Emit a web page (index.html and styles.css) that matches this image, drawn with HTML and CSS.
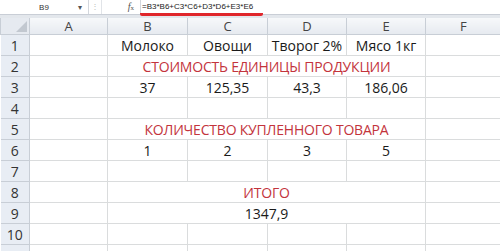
FILE: index.html
```html
<!DOCTYPE html>
<html lang="ru">
<head>
    <meta charset="UTF-8">
    <title>Расчёт стоимости</title>
    <link rel="stylesheet" href="styles.css">
</head>
<body>
    <!-- Formula bar -->
    <div class="formula-bar">
        <div class="name-box">
            <span class="cell-name">B9</span>
            <span class="drop">&#9662;</span>
        </div>
        <div class="grip">&#8942;</div>
        <div class="fx"><i>f</i><sub>x</sub></div>
        <div class="formula">
            <span class="formula-text">=B3*B6+C3*C6+D3*D6+E3*E6</span>
        </div>
    </div>
    <div class="bar-gap"></div>

    <!-- Sheet -->
    <table class="sheet">
        <colgroup>
            <col class="c-head">
            <col class="c-a">
            <col class="c-b">
            <col class="c-c">
            <col class="c-d">
            <col class="c-e">
            <col class="c-f">
        </colgroup>
        <thead>
            <tr>
                <th class="corner"><span class="tri"></span></th>
                <th>A</th>
                <th>B</th>
                <th>C</th>
                <th>D</th>
                <th>E</th>
                <th>F</th>
            </tr>
        </thead>
        <tbody>
            <tr>
                <th>1</th>
                <td></td>
                <td>Молоко</td>
                <td>Овощи</td>
                <td>Творог 2%</td>
                <td>Мясо 1кг</td>
                <td></td>
            </tr>
            <tr>
                <th>2</th>
                <td></td>
                <td colspan="4" class="title">СТОИМОСТЬ ЕДИНИЦЫ ПРОДУКЦИИ</td>
                <td></td>
            </tr>
            <tr>
                <th>3</th>
                <td></td>
                <td>37</td>
                <td>125,35</td>
                <td>43,3</td>
                <td>186,06</td>
                <td></td>
            </tr>
            <tr>
                <th>4</th>
                <td></td><td></td><td></td><td></td><td></td><td></td>
            </tr>
            <tr>
                <th>5</th>
                <td></td>
                <td colspan="4" class="title">КОЛИЧЕСТВО КУПЛЕННОГО ТОВАРА</td>
                <td></td>
            </tr>
            <tr>
                <th>6</th>
                <td></td>
                <td>1</td>
                <td>2</td>
                <td>3</td>
                <td>5</td>
                <td></td>
            </tr>
            <tr>
                <th>7</th>
                <td></td><td></td><td></td><td></td><td></td><td></td>
            </tr>
            <tr>
                <th>8</th>
                <td></td>
                <td colspan="4" class="title">ИТОГО</td>
                <td></td>
            </tr>
            <tr>
                <th>9</th>
                <td></td>
                <td colspan="4">1347,9</td>
                <td></td>
            </tr>
            <tr>
                <th>10</th>
                <td></td><td></td><td></td><td></td><td></td><td></td>
            </tr>
            <tr class="last">
                <th></th>
                <td></td><td></td><td></td><td></td><td></td><td></td>
            </tr>
        </tbody>
    </table>
</body>
</html>
```

FILE: styles.css
```css
/* Page */
body {
    margin: 0;
    width: 500px;
    height: 252px;
    overflow: hidden;
    background-color: #fff;
    font-family: "Open Sans", Arial, sans-serif;
}

/* Formula bar */
.formula-bar {
    display: flex;
    height: 14px;
    border-bottom: 1px solid #c9ced6;
    background-color: #fff;
    font-family: "Liberation Sans", Arial, sans-serif;
    font-size: 8px;
    color: #333;
}

.name-box {
    display: flex;
    align-items: center;
    width: 88px;
    border-right: 1px solid #d3d7dd;
}

.cell-name {
    flex: 1;
    padding-left: 10px;
    text-align: center;
}

.drop {
    width: 10px;
    font-size: 8px;
    color: #555;
}

.grip {
    width: 12px;
    line-height: 14px;
    text-align: center;
    color: #bbb;
    border-right: 1px solid #e1e4e8;
}

.fx {
    width: 32px;
    text-align: right;
    padding-right: 6px;
    line-height: 13px;
    font-family: "Liberation Serif", serif;
    font-size: 10px;
    color: #555;
}

.fx sub {
    font-size: 7px;
    vertical-align: baseline;
}

.formula {
    flex: 1;
    border-left: 1px solid #d3d7dd;
    padding-left: 5px;
    line-height: 13px;
}

.formula-text {
    display: inline-block;
    padding: 0 10px 0 2px;
    margin-left: -6px;
    line-height: 12px;
    border-bottom: 3px solid #e0262b;
    border-radius: 2px;
    color: #222;
}

.bar-gap {
    height: 3px;
    background-color: #e3e7ec;
}

/* Sheet grid */
.sheet {
    border-collapse: collapse;
    table-layout: fixed;
    width: 500px;
}

.c-head { width: 29px; }
.c-a { width: 78px; }
.c-b { width: 80px; }
.c-c { width: 80px; }
.c-d { width: 79px; }
.c-e { width: 79px; }
.c-f { width: 75px; }

.sheet th,
.sheet td {
    padding: 0;
    overflow: hidden;
    white-space: nowrap;
}

.sheet thead th {
    height: 16px;
    font-weight: normal;
    font-size: 13px;
    color: #444;
    line-height: 16px;
    background: linear-gradient(#f6f8fa, #e6eaf0);
    border: 1px solid #c8ced6;
    border-top: none;
}

.sheet thead th:last-child {
    border-right: none;
}

.sheet thead th.corner {
    position: relative;
    background: #e6eaf0;
}

.tri {
    position: absolute;
    right: 2px;
    bottom: 2px;
    width: 0;
    height: 0;
    border-left: 11px solid transparent;
    border-bottom: 11px solid #c2c8d0;
}

.sheet tbody th {
    height: 20px;
    font-weight: normal;
    font-size: 14px;
    color: #333;
    text-align: center;
    vertical-align: bottom;
    line-height: 18px;
    background-color: #e8edf4;
    border: 1px solid #c8ced6;
    border-left: none;
}

.sheet td {
    height: 20px;
    border: 1px solid #dadcdd;
    text-align: center;
    vertical-align: bottom;
    font-size: 14px;
    line-height: 19px;
    color: #1a1a1a;
}

.sheet td:last-child {
    border-right: none;
}

.sheet tr.last th,
.sheet tr.last td {
    height: 6px;
    border-bottom: none;
}

.sheet td.title {
    color: #c3343c;
    letter-spacing: -0.2px;
}
```
